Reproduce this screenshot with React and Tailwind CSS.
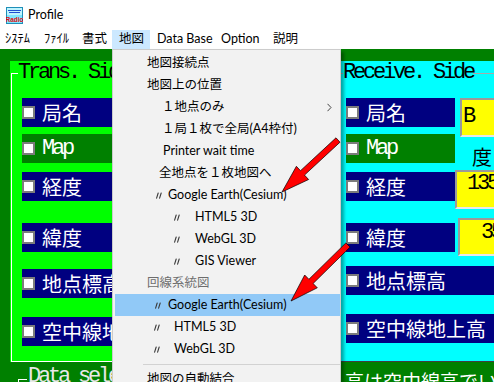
import React from "react";

function AppIcon() {
  return (
    <svg width="17" height="17" viewBox="0 0 17 17" className="ml-[6px] shrink-0">
      <rect x="0" y="0" width="17" height="17" fill="#1f8fb8" />
      <rect x="1" y="1" width="15" height="15" fill="#bff4ff" />
      <rect x="2" y="3" width="13" height="1" fill="#2050d0" />
      <rect x="3" y="5" width="11" height="1" fill="#2050d0" />
      <rect x="1" y="8" width="15" height="8" fill="#7fe6ff" />
      <text x="8.5" y="14.5" fontSize="6.5" fontWeight="bold" fill="#e01010" textAnchor="middle" fontFamily="Liberation Sans, sans-serif">Radio</text>
    </svg>
  );
}

function Ditto() {
  return (
    <svg width="6" height="7" viewBox="0 0 6 7" className="shrink-0">
      <path d="M0.6 6.2 L2.2 1" stroke="#3a3a3a" strokeWidth="1.1" strokeLinecap="round" />
      <path d="M3.6 6.2 L5.2 1" stroke="#3a3a3a" strokeWidth="1.1" strokeLinecap="round" />
    </svg>
  );
}

function Check() {
  return <span className="block w-[13px] h-[13px] shrink-0 border-2 border-[#7c7c7c] bg-white" />;
}

function Label({ text, latin, green, className = "" }) {
  return (
    <div className={`flex items-center h-[29px] shrink-0 ${green ? "bg-[#008000]" : "bg-[#000080]"} ${className}`}>
      <Check />
      {latin ? (
        <span className="ml-[7px] text-white whitespace-nowrap font-['Liberation_Mono',monospace] text-[22px] leading-[22px] tracking-[-3.2px]">{text}</span>
      ) : (
        <span className="ml-[7px] text-white whitespace-nowrap font-['Noto_Sans_CJK_JP',sans-serif] text-[20px] leading-[22px]">{text}</span>
      )}
    </div>
  );
}

function MenuItem({ children, className = "" }) {
  return <div className={`h-[22px] flex items-center whitespace-nowrap ${className}`}>{children}</div>;
}

export default function App() {
  const menus = [
    { t: "ｼｽﾃﾑ", c: "w-[36px] pl-[4px]" },
    { t: "ﾌｧｲﾙ", c: "w-[38px] pl-[7px]" },
    { t: "書式", c: "w-[38px] pl-[7px]" },
    { t: "地図", c: "w-[38px] pl-[6px] bg-[#cce8ff] border-[#99d1ff]" },
    { t: "Data Base", c: "w-[64px] pl-[6px]" },
    { t: "Option", c: "w-[52px] pl-[6px]" },
    { t: "説明", c: "w-[40px] pl-[6px]" },
  ];

  return (
    <div className="relative w-[494px] h-[382px] overflow-hidden bg-white font-['Lato','Noto_Sans_CJK_JP',sans-serif] text-black">
      {/* title bar */}
      <div className="h-[30px] flex items-center">
        <AppIcon />
        <span className="ml-[5px] text-[12.5px]">Profile</span>
      </div>

      {/* menu bar */}
      <div className="h-[19px] flex text-[12.5px]">
        {menus.map((m) => (
          <div key={m.t} className={`h-[19px] shrink-0 flex items-center border border-transparent whitespace-nowrap ${m.c}`}>
            {m.t}
          </div>
        ))}
      </div>

      {/* client area */}
      <div className="h-[333px] bg-[#008000] pt-[12px]">
        <div className="flex h-[301px]">
          {/* Trans. Side */}
          <div className="ml-[10px] w-[326px] shrink-0 bg-[#00ff00] pl-[1px] pt-[1px]">
            <fieldset className="h-[300px] min-w-0 border border-r-0 border-white">
              <legend className="ml-[6px] font-['Liberation_Mono',monospace] text-[22px] leading-[22px] tracking-[-3.2px] text-black">Trans. Side</legend>
              <div className="mt-[14px] ml-[10px] w-[314px] flex flex-col">
                <Label text="局名" />
                <Label text="Map" latin green className="mt-[7px] h-[27px]" />
                <Label text="経度" className="mt-[9px]" />
                <Label text="緯度" className="mt-[22px] h-[28px]" />
                <Label text="地点標高" className="mt-[17px]" />
                <Label text="空中線地上高" className="mt-[19px]" />
              </div>
            </fieldset>
          </div>

          {/* Receive. Side */}
          <div className="w-[170px] shrink-0 bg-[#00ffff] pl-[1px] pt-[1px]">
            <fieldset className="h-[300px] min-w-0 border border-r-0 border-[#a8a8a8] border-b-[#404040]">
              <legend className="ml-[5px] font-['Liberation_Mono',monospace] text-[22px] leading-[22px] tracking-[-3.2px] text-black">Receive. Side</legend>
              <div className="mt-[14px] flex">
                <div className="ml-[8px] w-[109px] shrink-0 flex flex-col">
                  <Label text="局名" />
                  <Label text="Map" latin green className="mt-[7px] h-[27px]" />
                  <Label text="経度" className="mt-[9px]" />
                  <Label text="緯度" className="mt-[22px] h-[28px]" />
                </div>
                <div className="flex flex-col shrink-0 font-['Liberation_Mono',monospace] text-[22px] leading-[22px] tracking-[-3.2px]">
                  <div className="ml-[5px] w-[50px] h-[39px] bg-[#ffff00] border-2 border-[#9a9a9a] border-r-0 border-b-[#e8e8e8] pl-[1px] pt-[6px]">B</div>
                  <div className="ml-[17px] mt-[9px] h-[22px] font-['Noto_Sans_CJK_JP',sans-serif] text-[20px] tracking-normal">度</div>
                  <div className="mt-[2px] w-[50px] h-[39px] bg-[#ffff00] border-2 border-[#9a9a9a] border-r-0 border-b-[#e8e8e8] pl-[10px] pt-[1px]">135</div>
                  <div className="ml-[3px] mt-[9px] w-[50px] h-[38px] bg-[#ffff00] border-2 border-[#9a9a9a] border-r-0 border-b-[#e8e8e8] pl-[21px] pt-[2px]">35</div>
                </div>
              </div>
              <Label text="地点標高" className="ml-[8px] mt-[10px] w-[160px]" />
              <Label text="空中線地上高" className="ml-[8px] mt-[19px] w-[160px]" />
            </fieldset>
          </div>
        </div>

        {/* next group */}
        <div className="flex">
          <div className="w-[336px] shrink-0 flex items-start">
            <span className="block shrink-0 ml-[18px] mt-[17px] w-[9px] h-[8px] border-t border-l border-white" />
            <span className="ml-[1px] mt-[4px] whitespace-nowrap font-['Liberation_Mono',monospace] text-[22px] leading-[22px] tracking-[-3.2px] text-[#e8e8e8]">Data selection</span>
          </div>
          <span className="ml-[9px] mt-[8px] shrink-0 whitespace-nowrap font-['Noto_Sans_CJK_JP',sans-serif] text-[19px] leading-[22px] text-white">高は空中線高でいう</span>
        </div>
      </div>

      {/* dropdown menu */}
      <div className="absolute left-[112px] top-[49px] w-[229px] h-[345px] bg-[#f2f2f2] border border-[#cccccc] shadow-[3px_3px_3px_rgba(0,0,0,0.35)] pt-[2px] text-[12.5px]">
        <MenuItem className="pl-[34px]">地図接続点</MenuItem>
        <MenuItem className="pl-[34px]">地図上の位置</MenuItem>
        <MenuItem className="pl-[49px] pr-[8px] justify-between">
          <span>１地点のみ</span>
          <svg width="5" height="9" viewBox="0 0 5 9">
            <path d="M0.5 0.8 L4 4.5 L0.5 8.2" fill="none" stroke="#444" strokeWidth="1" />
          </svg>
        </MenuItem>
        <MenuItem className="pl-[49px]">１局１枚で全局(A4枠付)</MenuItem>
        <MenuItem className="pl-[50px]">Printer wait time</MenuItem>
        <MenuItem className="pl-[46px]">全地点を１枚地図へ</MenuItem>
        <MenuItem className="pl-[43px]">
          <Ditto />
          <span className="ml-[6px]">Google Earth(Cesium)</span>
        </MenuItem>
        <MenuItem className="pl-[61px]">
          <Ditto />
          <span className="ml-[15px]">HTML5 3D</span>
        </MenuItem>
        <MenuItem className="pl-[61px]">
          <Ditto />
          <span className="ml-[15px]">WebGL 3D</span>
        </MenuItem>
        <MenuItem className="pl-[61px]">
          <Ditto />
          <span className="ml-[15px]">GIS Viewer</span>
        </MenuItem>
        <MenuItem className="pl-[34px] text-[#6d6d6d]">回線系統図</MenuItem>
        <MenuItem className="ml-[2px] pl-[40px] bg-[#91c9f7]">
          <Ditto />
          <span className="ml-[7px]">Google Earth(Cesium)</span>
        </MenuItem>
        <MenuItem className="pl-[41px]">
          <Ditto />
          <span className="ml-[14px]">HTML5 3D</span>
        </MenuItem>
        <MenuItem className="pl-[41px]">
          <Ditto />
          <span className="ml-[14px]">WebGL 3D</span>
        </MenuItem>
        <div className="h-[8px] flex items-center">
          <div className="ml-[30px] flex-1 h-px bg-[#d2d2d2]" />
        </div>
        <MenuItem className="pl-[34px]">地図の自動結合</MenuItem>
      </div>

      {/* red arrows drawn over the screenshot */}
      <svg className="absolute inset-0 pointer-events-none" width="494" height="382" viewBox="0 0 494 382">
        <polygon
          points="340,142.2 304.5,175.1 308.6,179.5 282,192 296.4,166.3 300.5,170.7 336,137.8"
          fill="#ff0000"
          stroke="#000"
          strokeWidth="0.7"
        />
        <polygon
          points="350.1,247.1 313.1,283.5 317.3,287.8 291,301 304.7,275 308.9,279.3 345.9,242.9"
          fill="#ff0000"
          stroke="#000"
          strokeWidth="0.7"
        />
      </svg>
    </div>
  );
}
